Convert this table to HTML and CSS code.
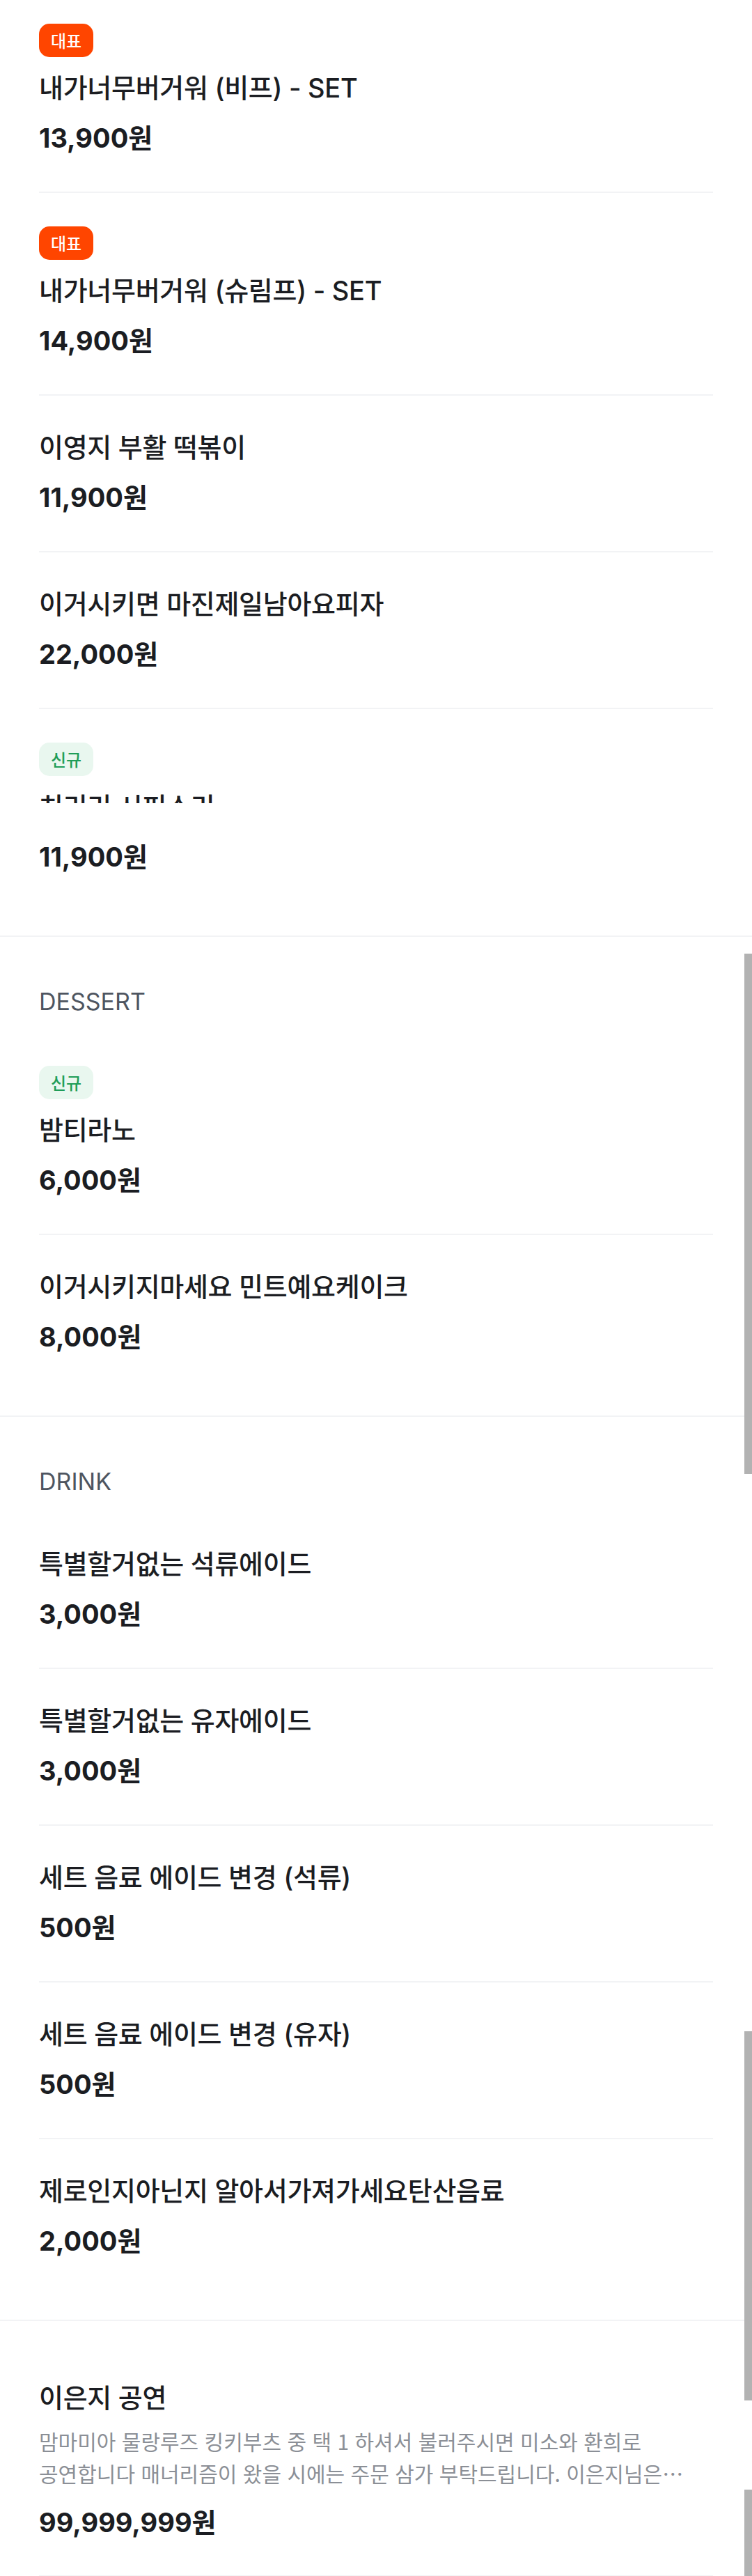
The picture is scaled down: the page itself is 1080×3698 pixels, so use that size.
FILE: index.html
```html
<!DOCTYPE html>
<html lang="ko">
<head>
<meta charset="utf-8">
<title>메뉴</title>
<link rel="stylesheet" href="styles.css">
</head>
<body>
<div class="page">
  <section class="menu-section first">
    <ul class="items">
      <li class="item">
        <span class="badge badge-rep">대표</span>
        <p class="name">내가너무버거워 (비프) - SET</p>
        <p class="price">13,900원</p>
      </li>
      <li class="item">
        <span class="badge badge-rep">대표</span>
        <p class="name">내가너무버거워 (슈림프) - SET</p>
        <p class="price">14,900원</p>
      </li>
      <li class="item">
        <p class="name">이영지 부활 떡볶이</p>
        <p class="price">11,900원</p>
      </li>
      <li class="item">
        <p class="name">이거시키면 마진제일남아요피자</p>
        <p class="price">22,000원</p>
      </li>
      <li class="item">
        <span class="badge badge-new">신규</span>
        <p class="name name-clipped">치리리 시피소리</p>
        <p class="price">11,900원</p>
      </li>
    </ul>
  </section>

  <section class="menu-section">
    <h2 class="section-title">DESSERT</h2>
    <ul class="items">
      <li class="item">
        <span class="badge badge-new">신규</span>
        <p class="name">밤티라노</p>
        <p class="price">6,000원</p>
      </li>
      <li class="item">
        <p class="name">이거시키지마세요 민트예요케이크</p>
        <p class="price">8,000원</p>
      </li>
    </ul>
  </section>

  <section class="menu-section">
    <h2 class="section-title">DRINK</h2>
    <ul class="items">
      <li class="item">
        <p class="name">특별할거없는 석류에이드</p>
        <p class="price">3,000원</p>
      </li>
      <li class="item">
        <p class="name">특별할거없는 유자에이드</p>
        <p class="price">3,000원</p>
      </li>
      <li class="item">
        <p class="name">세트 음료 에이드 변경 (석류)</p>
        <p class="price">500원</p>
      </li>
      <li class="item">
        <p class="name">세트 음료 에이드 변경 (유자)</p>
        <p class="price">500원</p>
      </li>
      <li class="item">
        <p class="name">제로인지아닌지 알아서가져가세요탄산음료</p>
        <p class="price">2,000원</p>
      </li>
    </ul>
  </section>

  <section class="menu-section">
    <ul class="items">
      <li class="item item-continued">
        <p class="name">이은지 공연</p>
        <p class="desc">맘마미아 물랑루즈 킹키부츠 중 택 1 하셔서 불러주시면 미소와 환희로 공연합니다 매너리즘이 왔을 시에는 주문 삼가 부탁드립니다. 이은지님은 공연에 진심입니다 많이 사랑해주세요</p>
        <p class="price">99,999,999원</p>
      </li>
    </ul>
  </section>

  <div class="scroll-thumb thumb-a"></div>
  <div class="scroll-thumb thumb-b"></div>
  <div class="scroll-thumb thumb-c"></div>
</div>
</body>
</html>
```

FILE: styles.css
```css
html, body {
  margin: 0;
  padding: 0;
  background: #ffffff;
  overflow: hidden;
}

body {
  font-family: Inter, "Noto Sans CJK KR", "Noto Sans", sans-serif;
  color: #1b1d22;
}

.page {
  position: relative;
  width: 1080px;
  height: 3698px;
  overflow: hidden;
}

.menu-section {
  padding: 36px 0;
  border-top: 2px solid #f2f3f5;
}

.menu-section.first {
  border-top: none;
  padding-top: 0;
  margin-top: -14px;
}

.section-title {
  margin: 0;
  padding: 34px 56px 21px;
  font-size: 34px;
  line-height: 46px;
  font-weight: 400;
  color: #4e5560;
}

.items {
  list-style: none;
  margin: 0 56px;
  padding: 0;
}

.item {
  display: flex;
  flex-direction: column;
  align-items: flex-start;
  padding: 48px 0 51px;
  border-bottom: 2px solid #f2f3f5;
}

.item:last-child {
  border-bottom: none;
}

.item.item-continued {
  padding-bottom: 50px;
  border-bottom: 2px solid #f2f3f5;
}

.badge {
  display: inline-block;
  height: 48px;
  line-height: 48px;
  padding: 0 17px;
  border-radius: 15px;
  font-family: "Noto Sans CJK KR", sans-serif;
  font-size: 24px;
  font-weight: 500;
  margin-bottom: 18px;
}

.badge-rep {
  background: #ff4500;
  color: #ffffff;
}

.badge-new {
  background: #e9f7ef;
  color: #1f9d58;
}

.name {
  margin: 0;
  font-size: 38px;
  line-height: 52px;
  font-weight: 500;
  letter-spacing: -0.3px;
  color: #1b1d22;
}

.name-clipped {
  clip-path: inset(0 0 31px 0);
}

.price {
  margin: 20px 0 0;
  font-size: 38px;
  line-height: 52px;
  font-weight: 700;
  color: #1b1d22;
}

.desc {
  margin: 13px 0 0;
  font-family: "Noto Sans CJK KR", sans-serif;
  font-size: 30px;
  line-height: 46px;
  color: #8b8f96;
  word-break: keep-all;
  display: -webkit-box;
  -webkit-box-orient: vertical;
  -webkit-line-clamp: 2;
  overflow: hidden;
}

.desc + .price {
  margin-top: 22px;
}

.scroll-thumb {
  position: absolute;
  right: 0;
  width: 11px;
  background: #b2b2b2;
}

.thumb-a {
  top: 1369px;
  height: 747px;
}

.thumb-b {
  top: 2916px;
  height: 530px;
}

.thumb-c {
  top: 3574px;
  height: 124px;
}
```
